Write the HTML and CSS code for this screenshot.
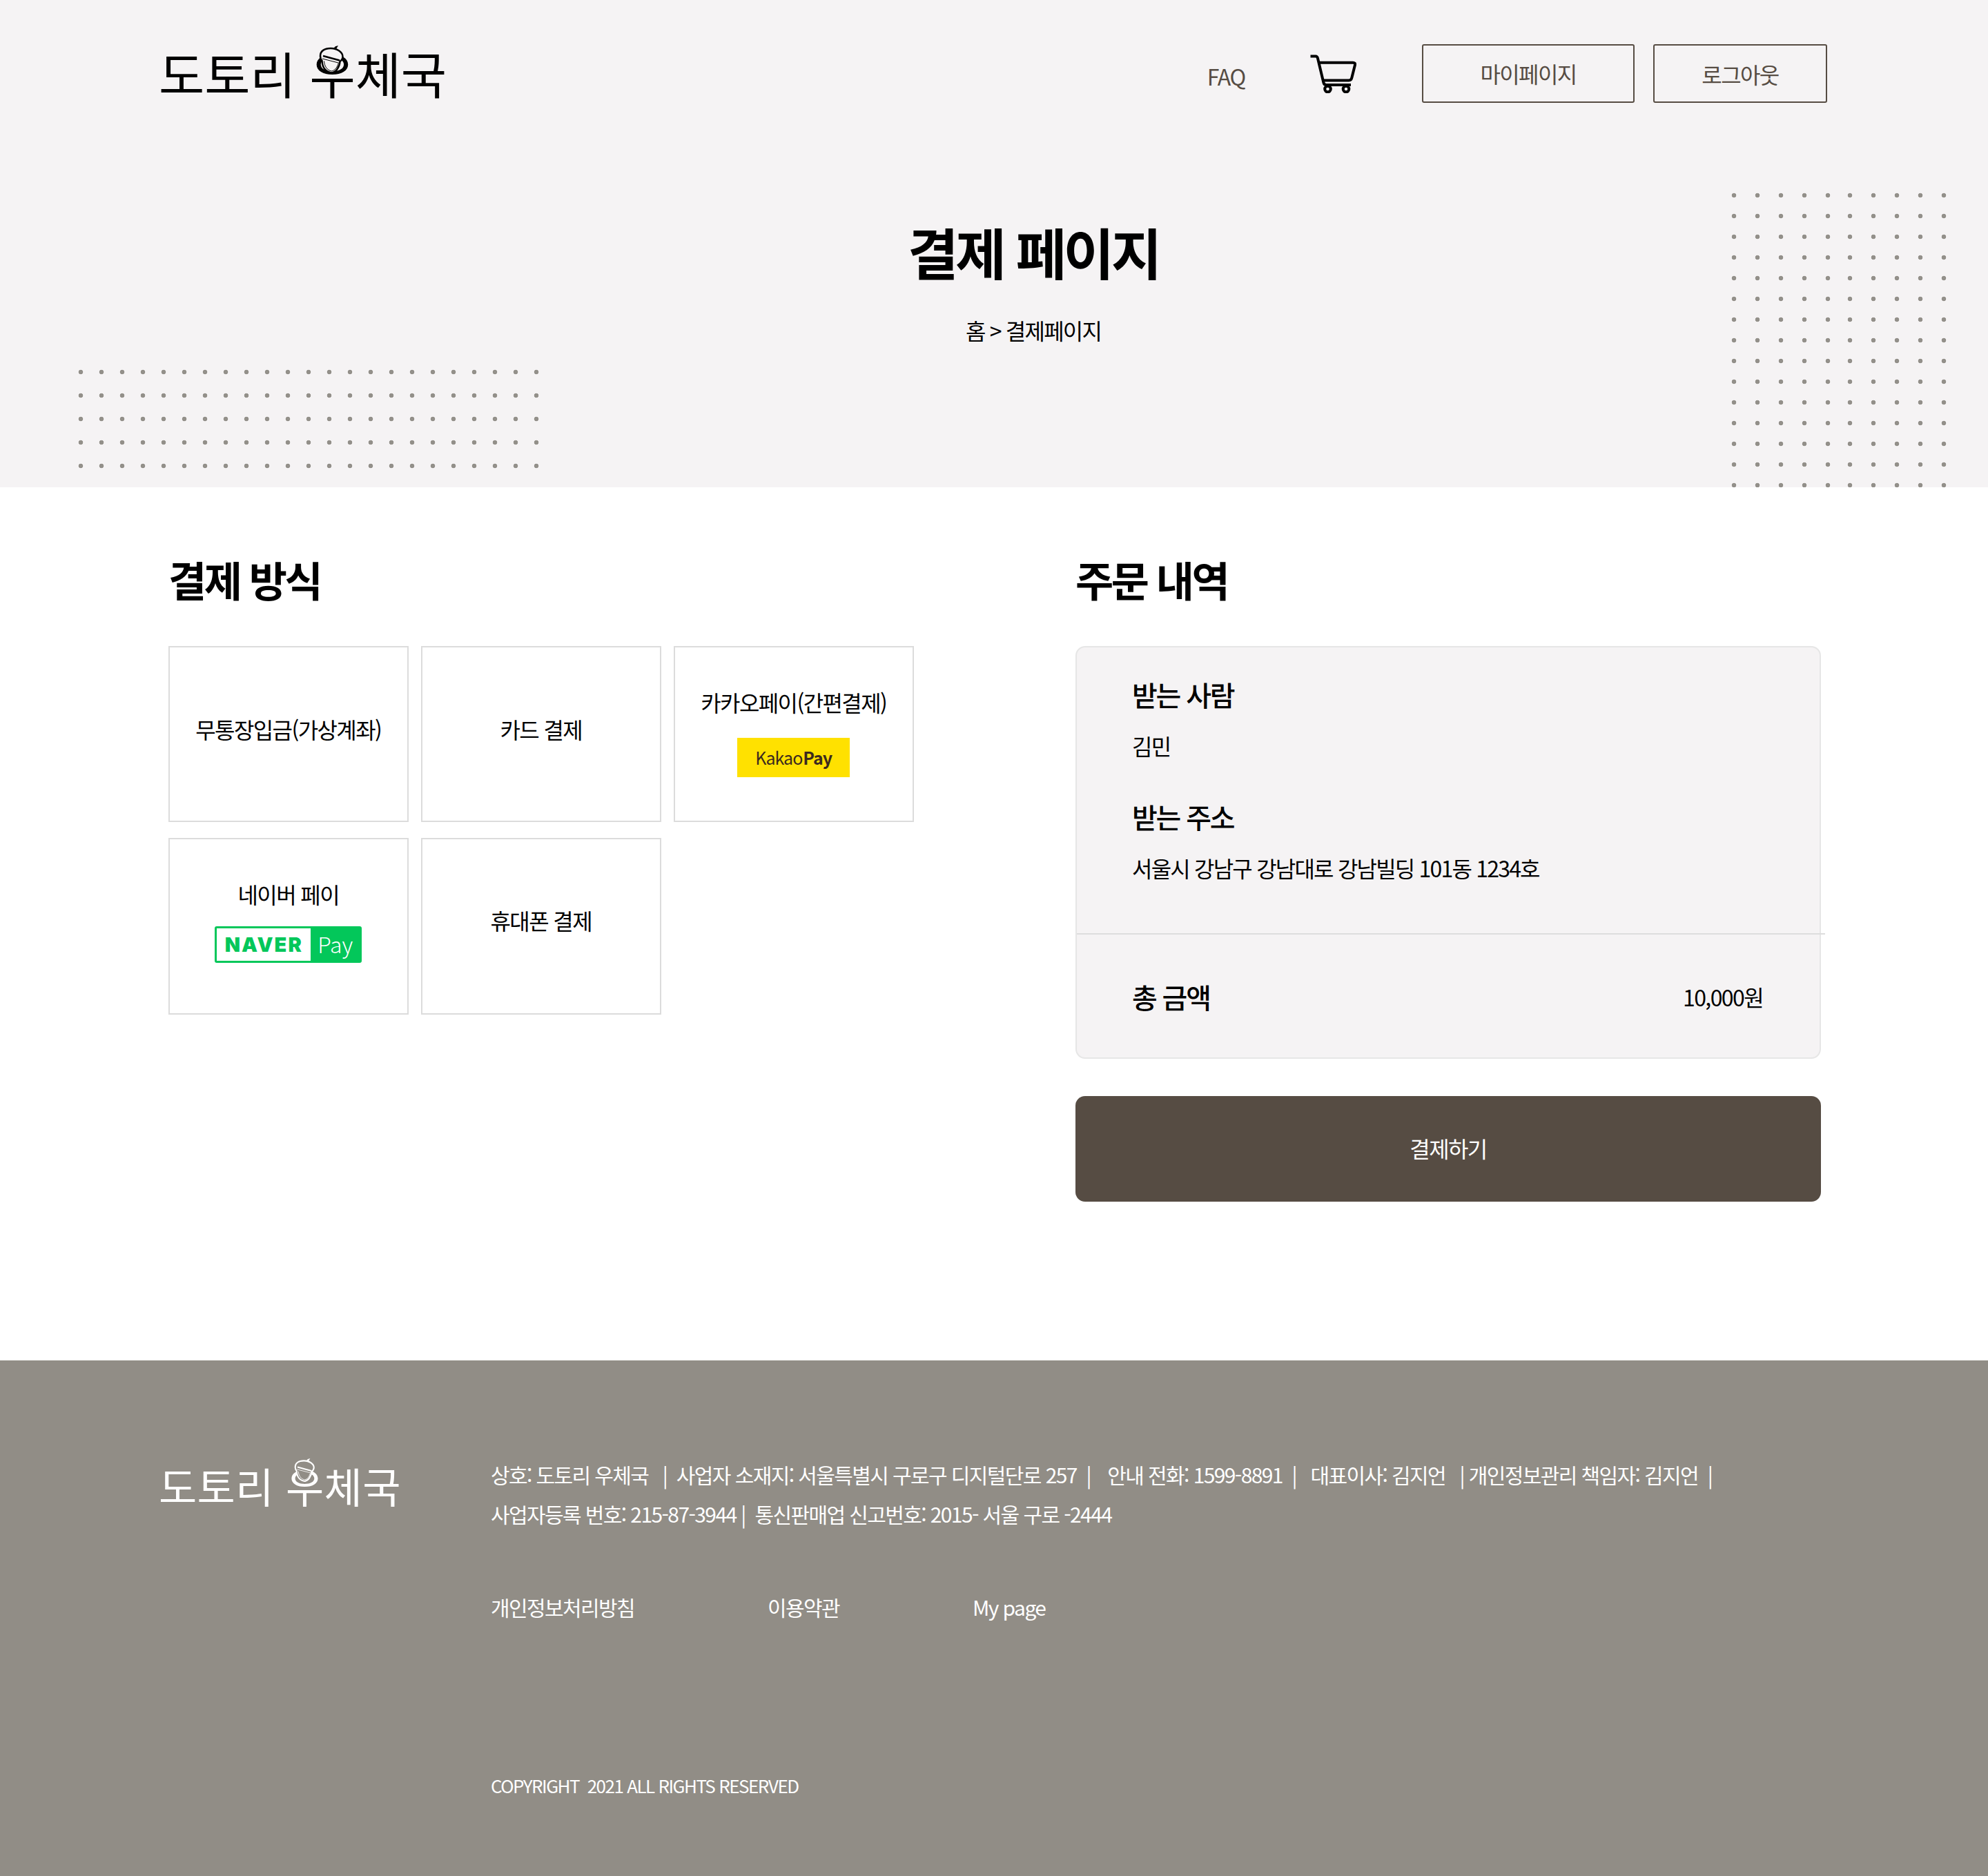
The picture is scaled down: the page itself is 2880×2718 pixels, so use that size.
FILE: index.html
```html
<!DOCTYPE html>
<html lang="ko">
<head>
    <meta charset="UTF-8">
    <meta name="viewport" content="width=device-width, initial-scale=1.0">
    <title>결제 페이지</title>
    <link rel="stylesheet" href="styles.css">
</head>
<body>
    <svg class="defs" width="0" height="0" aria-hidden="true">
        <symbol id="acorn" viewBox="0 0 36 42">
            <path class="acorn-stem" d="M17 5C20 5 22 4 23 2C24 1 26 .5 28 0L25 5L21 7Z"/>
            <path class="acorn-body" d="M2 15C2 8 8 4 17 4C27 4 34.500 10 34.500 16C34.500 19 32.500 21.500 30.500 23C30 31 25 38 19 39.500C11 39 5 33 4.500 22C2.500 20 2 18 2 15Z"/>
            <path class="acorn-band" d="M6 15L30 21.500"/>
            <path class="acorn-line" d="M5 19L30 25.500M7.500 22.500C8 30 12 36 18.500 37C24 36 27 30 28 26"/>
        </symbol>
    </svg>

    <section class="hero">
        <span class="dots dots-left"></span>
        <div class="dots-right">
            <span class="dots dots-right-a"></span>
            <span class="dots dots-right-b"></span>
        </div>
        <header class="topbar">
            <a class="logo">도토리 <span class="logo-char">우<svg class="acorn"><use href="#acorn"/></svg></span>체국</a>
            <nav class="topnav">
                <a class="faq">FAQ</a>
                <svg class="cart" viewBox="0 0 67 56" fill="none" stroke="#000" stroke-width="4">
                    <path d="M.5 2.500H8C10 2.500 10.500 3.500 11 5.500L19.500 41C20 43 21 44 23.500 44H59"/>
                    <path d="M13 11.700H62C64.500 11.700 65.500 13 65 15L60.500 33C60 36 58.500 37.500 56 37.500H18"/>
                    <circle cx="25.500" cy="50" r="4.300"/>
                    <circle cx="52" cy="50" r="4.300"/>
                </svg>
                <div class="topbtns">
                    <a class="btn-line btn-mypage">마이페이지</a>
                    <a class="btn-line btn-logout">로그아웃</a>
                </div>
            </nav>
        </header>
        <div class="hero-text">
            <h1>결제 페이지</h1>
            <p>홈 &gt; 결제페이지</p>
        </div>
    </section>

    <main class="checkout">
        <section class="pay-col">
            <h2>결제 방식</h2>
            <div class="pay-grid">
                <div class="pay-card">무통장입금(가상계좌)</div>
                <div class="pay-card">카드 결제</div>
                <div class="pay-card">
                    카카오페이(간편결제)
                    <span class="kakao">Kakao<b>Pay</b></span>
                </div>
                <div class="pay-card">
                    네이버 페이
                    <span class="naver"><b>NAVER</b><i>Pay</i></span>
                </div>
                <div class="pay-card">휴대폰 결제</div>
            </div>
        </section>
        <section class="order-col">
            <h2>주문 내역</h2>
            <div class="order-box">
                <div class="order-info">
                    <h3>받는 사람</h3>
                    <p>김민</p>
                    <h3 class="addr-title">받는 주소</h3>
                    <p class="addr">서울시 강남구 강남대로 강남빌딩 101동 1234호</p>
                </div>
                <div class="order-total">
                    <h3>총 금액</h3>
                    <span>10,000원</span>
                </div>
            </div>
            <button class="pay-btn">결제하기</button>
        </section>
    </main>

    <footer class="footer">
        <a class="logo logo-small">도토리 <span class="logo-char">우<svg class="acorn"><use href="#acorn"/></svg></span>체국</a>
        <div class="footer-body">
            <p>상호: 도토리 우체국 &nbsp; | &nbsp;사업자 소재지: 서울특별시 구로구 디지털단로 257 &nbsp;| &nbsp; <span class="footer-gap">안내 전화: 1599-8891</span> &nbsp;| &nbsp;&nbsp;대표이사: 김지언 &nbsp;&nbsp;| 개인정보관리 책임자: 김지언 &nbsp;|</p>
            <p>사업자등록 번호: 215-87-3944 | &nbsp;통신판매업 신고번호: 2015- 서울 구로 -2444</p>
            <div class="footer-links">
                <a>개인정보처리방침</a>
                <a>이용약관</a>
                <a>My page</a>
            </div>
            <p class="copyright">COPYRIGHT &nbsp;2021 ALL RIGHTS RESERVED</p>
        </div>
    </footer>
</body>
</html>
```

FILE: styles.css
```css
* {
    box-sizing: border-box;
}

body {
    margin: 0;
    font-family: "Noto Sans CJK KR", "Noto Sans", sans-serif;
    font-size: 32px;
    letter-spacing: -1.6px;
    color: #000;
    background-color: #fff;
}

h1, h2, h3, p {
    margin: 0;
}

.defs {
    position: absolute;
}

/* hero */
.hero {
    position: relative;
    height: 706px;
    background-color: #f5f3f4;
    overflow: hidden;
}

.dots {
    display: block;
    background-image: radial-gradient(circle, #93908a 3px, transparent 3.6px);
}

.dots-left {
    position: absolute;
    left: 102px;
    top: 522px;
    width: 690px;
    height: 170px;
    background-size: 30px 34px;
}

.dots-right {
    position: absolute;
    left: 2495px;
    top: 268px;
    display: flex;
    height: 450px;
}

.dots-right-a, .dots-right-b {
    height: 100%;
    background-size: 34px 30px;
}

.dots-right-a {
    width: 170px;
}

.dots-right-b {
    width: 170px;
    margin-left: -2px;
}

.topbar {
    position: relative;
    display: flex;
    justify-content: space-between;
    align-items: center;
    padding: 64px 233px 0 230px;
}

.logo {
    margin-top: -4px;
    font-size: 72px;
    line-height: 85px;
    letter-spacing: -0.1px;
    color: #000;
    --acorn-bg: #f5f3f4;
}

.logo-char {
    position: relative;
}

.acorn {
    position: absolute;
    left: 14px;
    top: 14px;
    width: 36px;
    height: 42px;
}

.acorn-stem {
    fill: currentColor;
}

.acorn-body {
    fill: var(--acorn-bg);
    stroke: currentColor;
    stroke-width: 2.500;
}

.acorn-band {
    fill: none;
    stroke: currentColor;
    stroke-width: 2.500;
}

.acorn-line {
    fill: none;
    stroke: currentColor;
    stroke-width: 1;
}

.topnav {
    display: flex;
    align-items: center;
}

.faq {
    color: #564c43;
    margin-right: 94px;
    margin-top: 6px;
    letter-spacing: -1.300px;
}

.cart {
    width: 67px;
    height: 56px;
    margin-right: 95px;
}

.topbtns {
    display: flex;
    gap: 27px;
}

.btn-line {
    display: flex;
    justify-content: center;
    align-items: center;
    height: 85px;
    padding-bottom: 2px;
    border: 2px solid #564c43;
    border-radius: 3px;
    color: #564c43;
}

.btn-mypage {
    width: 308px;
}

.btn-logout {
    width: 252px;
    padding-bottom: 0;
}

.hero-text {
    margin-top: 155px;
    padding-left: 114px;
    text-align: center;
}

.hero-text h1 {
    font-size: 80px;
    line-height: 118px;
    font-weight: 700;
    letter-spacing: -4.400px;
}

.hero-text p {
    margin-top: 32px;
    line-height: 48px;
    letter-spacing: -1.800px;
}

/* checkout */
.checkout {
    display: flex;
    padding: 93px 0 230px 244px;
}

.checkout h2 {
    font-size: 60px;
    line-height: 80px;
    font-weight: 700;
    letter-spacing: -3.500px;
    margin-bottom: 57px;
}

.pay-col {
    width: 1314px;
}

.pay-grid {
    display: grid;
    grid-template-columns: repeat(3, 347.500px);
    grid-template-rows: 255px 256px;
    gap: 23px 18.500px;
}

.pay-card {
    display: flex;
    flex-direction: column;
    justify-content: center;
    align-items: center;
    padding-bottom: 15px;
    border: 2px solid #dcdcdc;
    line-height: 48px;
}

.pay-card:nth-child(n+4) {
    padding-bottom: 19px;
}

.kakao {
    display: flex;
    justify-content: center;
    align-items: center;
    width: 163px;
    height: 57px;
    margin-top: 28px;
    margin-bottom: -6px;
    background-color: #ffe100;
    font-size: 25px;
    letter-spacing: -1px;
    color: #3c2a1e;
}

.kakao b {
    font-weight: 700;
    margin-left: 1px;
}

.naver {
    display: flex;
    width: 213px;
    height: 53px;
    margin-top: 23px;
    border: 3px solid #03c75a;
    border-radius: 3px;
    background-color: #03c75a;
}

.naver b {
    display: flex;
    justify-content: center;
    align-items: center;
    width: 136px;
    background-color: #fff;
    color: #03c75a;
    font-family: Inter, "Noto Sans", sans-serif;
    font-size: 29px;
    font-weight: 900;
    letter-spacing: 2px;
    line-height: 1;
}

.naver i {
    flex: 1;
    text-align: center;
    color: #fff;
    font-style: normal;
    font-size: 32px;
    font-weight: 300;
    letter-spacing: 0;
    line-height: 44px;
}

.order-col {
    width: 1080px;
}

.order-box {
    border: 2px solid #e6e6e6;
    border-radius: 14px;
    background-color: #f5f3f4;
}

.order-info {
    padding: 38px 80px 71px;
    line-height: 48px;
    border-bottom: 2px solid #dddddd;
    margin-right: -8px;
}

.order-box h3 {
    font-size: 40px;
    line-height: 60px;
    font-weight: 500;
    letter-spacing: -2.200px;
}

.order-info p {
    margin-top: 20px;
}

.order-info .addr-title {
    margin-top: 49px;
}

.order-info .addr {
    letter-spacing: -1.800px;
}

.order-total {
    display: flex;
    justify-content: space-between;
    align-items: center;
    height: 178px;
    padding: 2px 82px 0 80px;
}

.pay-btn {
    display: block;
    width: 100%;
    height: 153px;
    margin-top: 54px;
    padding-bottom: 4px;
    border: none;
    border-radius: 14px;
    background-color: #564c43;
    color: #fff;
    font-family: inherit;
    font-size: 32px;
    letter-spacing: -1.600px;
}

/* footer */
.footer {
    display: flex;
    height: 747px;
    padding: 137px 0 0 230px;
    background-color: #918d86;
    color: #fff;
    font-size: 30px;
    letter-spacing: -1.600px;
    line-height: 57px;
}

.footer-gap {
    margin-left: 4px;
}

.logo-small {
    width: 481px;
    margin-top: 4px;
    font-size: 60px;
    line-height: 80px;
    letter-spacing: .4px;
    color: #fff;
    --acorn-bg: #918d86;
}

.logo-small .acorn {
    left: 12px;
    top: 4px;
    width: 30px;
    height: 37px;
}

.footer-links {
    display: flex;
    gap: 193px;
    margin-top: 82px;
    line-height: 48px;
}

.copyright {
    margin-top: 211px;
    line-height: 48px;
    font-size: 26px;
    letter-spacing: -1.500px;
}
```
